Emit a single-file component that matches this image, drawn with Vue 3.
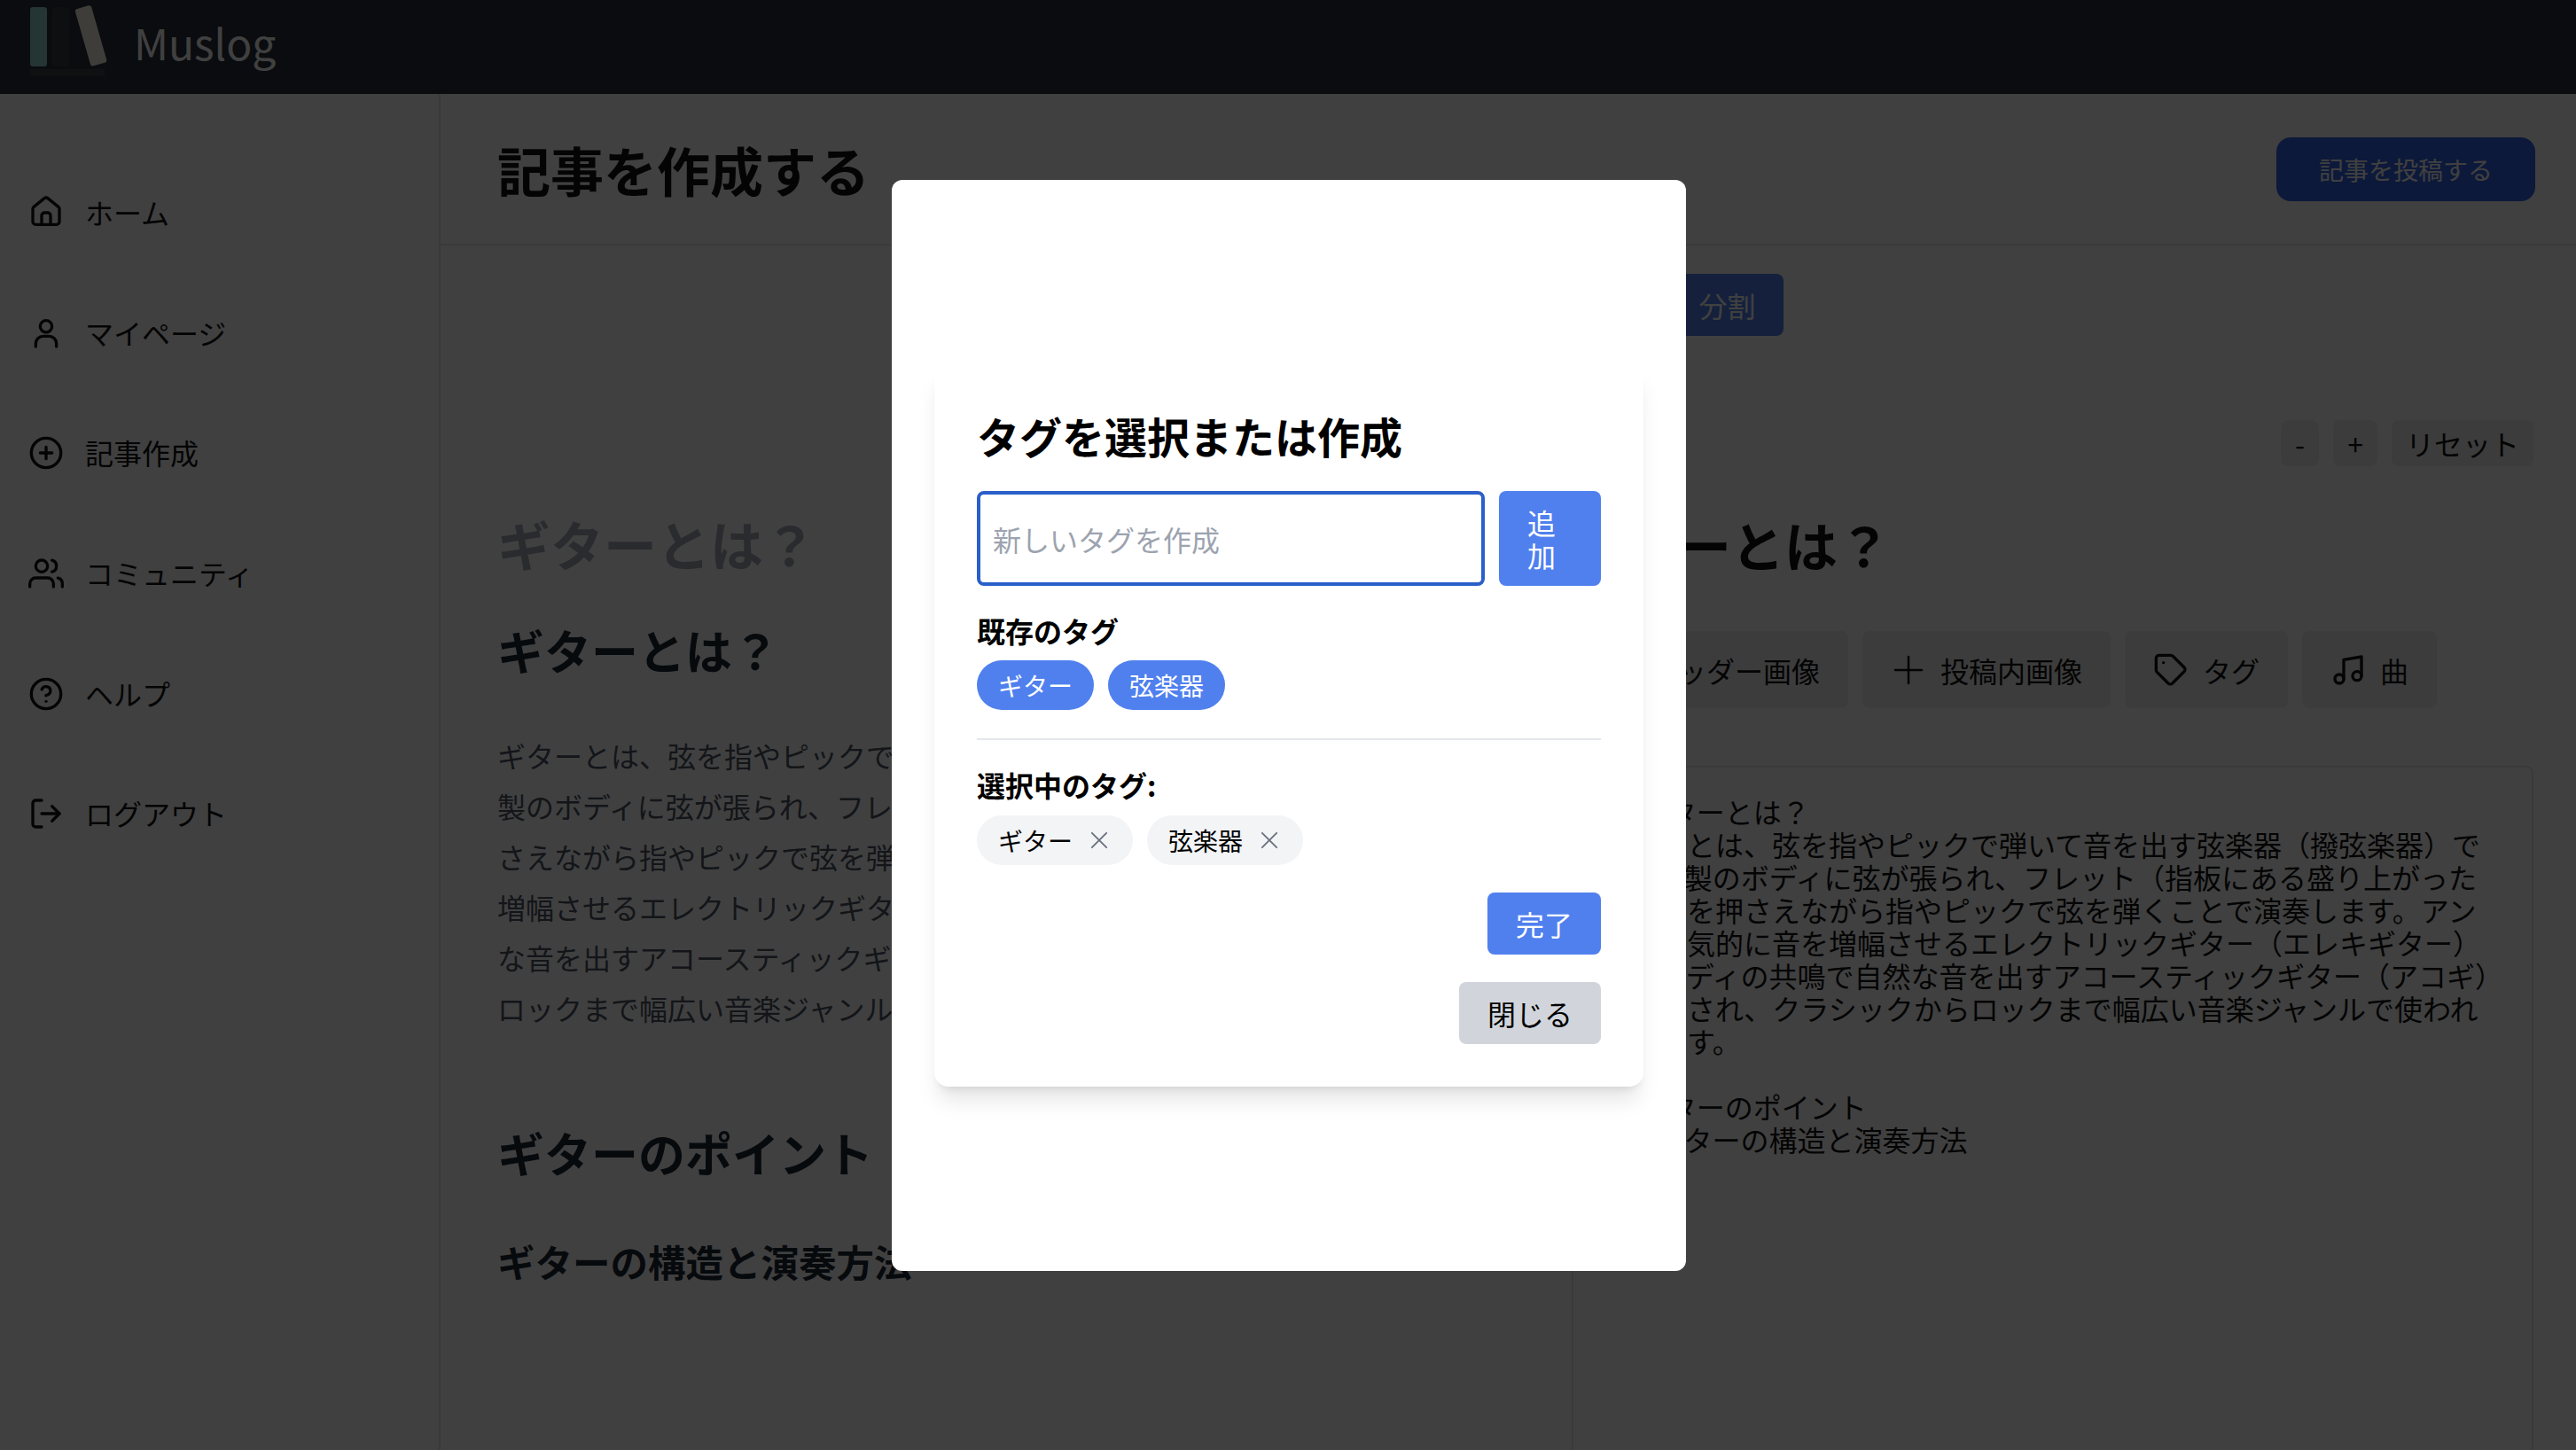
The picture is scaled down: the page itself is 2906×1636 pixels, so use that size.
<template>
  <div class="app">
    <header class="topbar">
      <svg class="logo" width="84" height="78" viewBox="0 0 84 78">
        <rect x="0" y="0" width="19" height="67" rx="3" fill="#94d2cc" />
        <rect x="25" y="0" width="19" height="67" rx="3" fill="#383c40" />
        <rect x="59" y="-1" width="19" height="67" rx="3" fill="#f6f2e2" transform="rotate(-16 68 32)" />
        <rect x="0" y="70" width="84" height="8" fill="#3c4044" />
      </svg>
      <span class="brand">Muslog</span>
    </header>

    <div class="body">
      <aside class="sidebar">
        <nav>
          <a v-for="item in navItems" :key="item.label" class="nav-item">
            <svg class="icon" viewBox="0 0 24 24">
              <path v-for="d in item.paths" :key="d" :d="d" />
            </svg>
            <span class="nav-label">{{ item.label }}</span>
          </a>
        </nav>
      </aside>

      <main class="main">
        <div class="main-head">
          <h1>記事を作成する</h1>
          <button class="post-btn">記事を投稿する</button>
        </div>

        <div class="modes">
          <button class="mode">エディタ</button>
          <button class="mode">プレビュー</button>
          <button class="mode active">分割</button>
        </div>

        <div class="panes">
          <section class="preview">
            <div class="preview-title">{{ title }}</div>
            <h2>{{ title }}</h2>
            <p>
              ギターとは、弦を指やピックで弾いて音を出す弦楽器（撥弦楽器）です。木製のボディに弦が張られ、フレット（指板にある盛り上がった部分）を押<br />さえながら指やピックで弦を弾くことで演奏します。アンプで電気的に音を増幅させるエレクトリックギター（エレキギター）と、ボディの共鳴で自然な音を出すアコースティックギター（アコギ）に大別され、クラシックからロックまで幅広い音楽ジャンルで使われています。
            </p>
            <h2 class="second">ギターのポイント</h2>
            <h3>ギターの構造と演奏方法</h3>
          </section>

          <section class="editor">
            <div class="zoom-row">
              <button class="zoom">-</button>
              <button class="zoom">+</button>
              <button class="zoom">リセット</button>
            </div>
            <input class="title-input" :value="title" />
            <div class="tools">
              <button v-for="tool in tools" :key="tool.label" class="tool">
                <svg class="icon" :class="{ thin: tool.thin }" viewBox="0 0 24 24">
                  <path v-for="d in tool.paths" :key="d" :d="d" />
                </svg>
                <span>{{ tool.label }}</span>
              </button>
            </div>
            <textarea class="source" :value="source"></textarea>
          </section>
        </div>
      </main>
    </div>

    <div class="overlay">
      <div class="modal">
        <div class="card">
          <h2 class="card-title">タグを選択または作成</h2>
          <div class="new-tag">
            <input class="tag-input" placeholder="新しいタグを作成" />
            <button class="add-btn">追加</button>
          </div>

          <h3 class="label first">既存のタグ</h3>
          <div class="pills">
            <button v-for="tag in tags" :key="tag" class="pill">{{ tag }}</button>
          </div>

          <hr class="divider" />

          <h3 class="label">選択中のタグ:</h3>
          <div class="pills">
            <span v-for="tag in tags" :key="tag" class="pill selected">
              {{ tag }}
              <svg class="remove" viewBox="0 0 24 24">
                <path d="M5 5l14 14M19 5L5 19" />
              </svg>
            </span>
          </div>

          <div class="actions">
            <button class="done">完了</button>
            <button class="close">閉じる</button>
          </div>
        </div>
      </div>
    </div>
  </div>
</template>

<script setup>
const title = 'ギターとは？'
const tags = ['ギター', '弦楽器']

const source = `## ギターとは？
ギターとは、弦を指やピックで弾いて音を出す弦楽器（撥弦楽器）です。木製のボディに弦が張られ、フレット（指板にある盛り上がった部分）を押さえながら指やピックで弦を弾くことで演奏します。アンプで電気的に音を増幅させるエレクトリックギター（エレキギター）と、ボディの共鳴で自然な音を出すアコースティックギター（アコギ）に大別され、クラシックからロックまで幅広い音楽ジャンルで使われています。

## ギターのポイント
### ギターの構造と演奏方法`

const navItems = [
  {
    label: 'ホーム',
    paths: [
      'M3 9.5a2 2 0 0 1 .7-1.5l7-5.7a2 2 0 0 1 2.6 0l7 5.7a2 2 0 0 1 .7 1.5V18a2 2 0 0 1-2 2H5a2 2 0 0 1-2-2z',
      'M9 20v-6a2 2 0 0 1 2-2h2a2 2 0 0 1 2 2v6',
    ],
  },
  {
    label: 'マイページ',
    paths: [
      'M5 21v-2a5 5 0 0 1 5-5h4a5 5 0 0 1 5 5v2',
      'M12 3.4a4 4 0 1 0 0 8 4 4 0 0 0 0-8z',
    ],
  },
  {
    label: '記事作成',
    paths: [
      'M12 2a10 10 0 1 0 0 20 10 10 0 0 0 0-20z',
      'M12 8v8M8 12h8',
    ],
  },
  {
    label: 'コミュニティ',
    paths: [
      'M17 21v-2a4 4 0 0 0-4-4H5a4 4 0 0 0-4 4v2',
      'M9 3a4 4 0 1 0 0 8 4 4 0 0 0 0-8z',
      'M23 21v-2a4 4 0 0 0-3-3.87',
      'M16 3.13a4 4 0 0 1 0 7.75',
    ],
  },
  {
    label: 'ヘルプ',
    paths: [
      'M12 2a10 10 0 1 0 0 20 10 10 0 0 0 0-20z',
      'M9.09 9a3 3 0 0 1 5.83 1c0 2-3 3-3 3',
      'M12 17h.01',
    ],
  },
  {
    label: 'ログアウト',
    paths: [
      'M9 21H5a2 2 0 0 1-2-2V5a2 2 0 0 1 2-2h4',
      'M16 17l5-5-5-5',
      'M21 12H9',
    ],
  },
]

const plus = ['M12 3v18M3 12h18']

const tools = [
  { label: 'ヘッダー画像', paths: plus, thin: true },
  { label: '投稿内画像', paths: plus, thin: true },
  {
    label: 'タグ',
    paths: [
      'M21 13l-8 8a2 2 0 0 1-2.8 0l-7.6-7.6A2 2 0 0 1 2 12V4a2 2 0 0 1 2-2h8a2 2 0 0 1 1.4.6l7.6 7.6a2 2 0 0 1 0 2.8z',
      'M7 7h.01',
    ],
  },
  {
    label: '曲',
    paths: [
      'M9 18V5l12-2v13',
      'M6 15a3 3 0 1 0 0 6 3 3 0 0 0 0-6z',
      'M18 13a3 3 0 1 0 0 6 3 3 0 0 0 0-6z',
    ],
  },
]
</script>

<style>
html,
body {
  margin: 0;
  overflow: hidden;
}
</style>

<style scoped>
.app {
  height: 1636px;
  overflow: hidden;
  background: #fff;
  color: #111;
  font-family: "Noto Sans CJK JP", "Noto Sans", sans-serif;
  font-size: 32px;
}

button,
input,
textarea {
  font: inherit;
  color: inherit;
  border: none;
  margin: 0;
}

.topbar {
  height: 106px;
  display: flex;
  align-items: center;
  background: #28303c;
  padding-left: 34px;
  box-sizing: border-box;
}

.logo {
  overflow: visible;
  margin-top: -12px;
  margin-right: 33px;
}

.brand {
  color: #fff;
  font-size: 48px;
  margin-top: -12px;
}

.body {
  display: flex;
  height: 1530px;
}

.sidebar {
  width: 495px;
  flex: none;
  border-right: 2px solid #e5e7eb;
  padding-top: 66px;
}

.nav-item {
  height: 135.7px;
  display: flex;
  align-items: center;
  gap: 24px;
  padding-left: 32px;
}

.nav-label {
  padding-bottom: 2px;
}

.icon {
  width: 40px;
  height: 40px;
  flex: none;
  fill: none;
  stroke: currentColor;
  stroke-width: 2;
  stroke-linecap: round;
  stroke-linejoin: round;
}

.icon.thin {
  stroke-width: 1.5;
}

.main {
  flex: 1;
  min-width: 0;
}

.main-head {
  height: 171px;
  border-bottom: 2px solid #e5e7eb;
  box-sizing: border-box;
  display: flex;
  align-items: center;
  justify-content: space-between;
  padding: 0 46px 0 64px;
}

.main-head h1 {
  margin: 0;
  font-size: 60px;
  font-weight: 700;
  line-height: 84px;
}

.post-btn {
  width: 292px;
  height: 72px;
  background: #3566e6;
  color: #fff;
  font-size: 28px;
  border-radius: 16px;
}

.modes {
  display: flex;
  justify-content: center;
  gap: 40px;
  padding-top: 32px;
}

.mode {
  height: 70px;
  padding: 0 32px;
  border-radius: 8px;
  background: #eeeef0;
}

.mode.active {
  background: #5080ee;
  color: #fff;
}

.panes {
  display: flex;
}

.preview {
  width: 1228px;
  flex: none;
  box-sizing: border-box;
  padding: 192px 64px 0;
}

.preview-title {
  font-size: 60px;
  font-weight: 700;
  line-height: 84px;
  color: #a6abb8;
}

.preview h2 {
  margin: 40px 0 0;
  font-size: 53px;
  line-height: 77px;
  font-weight: 700;
  color: #1f2937;
}

.preview p {
  margin: 52px 0 0;
  line-height: 57px;
  color: #4b5563;
}

.preview h2.second {
  margin-top: 96px;
}

.preview h3 {
  margin: 54px 0 0;
  font-size: 42.5px;
  line-height: 60px;
  font-weight: 700;
  color: #1f2937;
}

.editor {
  flex: 1;
  min-width: 0;
  padding: 95px 48px 0;
}

.zoom-row {
  display: flex;
  justify-content: flex-end;
  gap: 16px;
}

.zoom {
  height: 52px;
  padding: 0 16px;
  border-radius: 8px;
  background: #eeeef0;
  line-height: 52px;
}

.title-input {
  display: block;
  width: 100%;
  height: 84px;
  margin-top: 45px;
  padding: 0;
  font-size: 60px;
  font-weight: 700;
  background: transparent;
  outline: none;
}

.tools {
  display: flex;
  gap: 16px;
  margin-top: 57px;
}

.tool {
  height: 87px;
  display: flex;
  align-items: center;
  gap: 16px;
  padding: 0 32px;
  border-radius: 8px;
  background: #eeeef0;
}

.source {
  display: block;
  box-sizing: border-box;
  width: 100%;
  height: 900px;
  margin-top: 65px;
  padding: 31px 32px 32px;
  border: 2px solid #e5e7eb;
  border-radius: 8px;
  line-height: 37px;
  resize: none;
  outline: none;
  background: transparent;
}

.overlay {
  position: fixed;
  inset: 0;
  display: flex;
  align-items: center;
  justify-content: center;
  padding-left: 2px;
  background: rgba(0, 0, 0, 0.75);
}

.modal {
  width: 896px;
  height: 1231px;
  background: #fff;
  border-radius: 12px;
  display: flex;
  align-items: center;
  justify-content: center;
  color: #000;
}

.card {
  width: 800px;
  box-sizing: border-box;
  padding: 48px;
  background: #fff;
  border-radius: 16px;
  box-shadow: 0 20px 25px -5px rgba(0, 0, 0, 0.1), 0 8px 10px -6px rgba(0, 0, 0, 0.1);
}

.card-title {
  margin: 0 0 30px;
  font-size: 48px;
  line-height: 66px;
  font-weight: 700;
}

.new-tag {
  display: flex;
  gap: 16px;
}

.tag-input {
  flex: 1;
  min-width: 0;
  height: 107px;
  box-sizing: border-box;
  padding: 0 14px;
  border: 4px solid #2b5fc9;
  border-radius: 8px;
  outline: none;
  background: #fff;
}

.tag-input::placeholder {
  color: #9ca3af;
}

.add-btn {
  flex: 0 0 115px;
  height: 107px;
  padding: 0 32px;
  border-radius: 8px;
  background: #5080ee;
  color: #fff;
  line-height: 37px;
  text-align: left;
}

.label {
  margin: 28px 0 13px;
  font-size: 32px;
  line-height: 44px;
  font-weight: 700;
}

.label.first {
  margin-bottom: 12px;
}

.pills {
  display: flex;
  gap: 16px;
}

.pill {
  height: 56px;
  display: inline-flex;
  align-items: center;
  padding: 0 24px;
  border-radius: 28px;
  background: #5080ee;
  color: #fff;
  font-size: 28px;
}

.pill.selected {
  gap: 16px;
  background: #f3f4f6;
  color: #000;
}

.remove {
  width: 28px;
  height: 28px;
  fill: none;
  stroke: #6b7280;
  stroke-width: 1.6;
  stroke-linecap: round;
}

.divider {
  margin: 32px 0 0;
  border: none;
  border-top: 2px solid #e5e7eb;
}

.actions {
  display: flex;
  flex-direction: column;
  align-items: flex-end;
  gap: 31px;
  margin-top: 31px;
}

.done,
.close {
  height: 70px;
  padding: 0 32px;
  border-radius: 8px;
}

.done {
  background: #5080ee;
  color: #fff;
}

.close {
  background: #d1d5db;
  color: #000;
}
</style>
